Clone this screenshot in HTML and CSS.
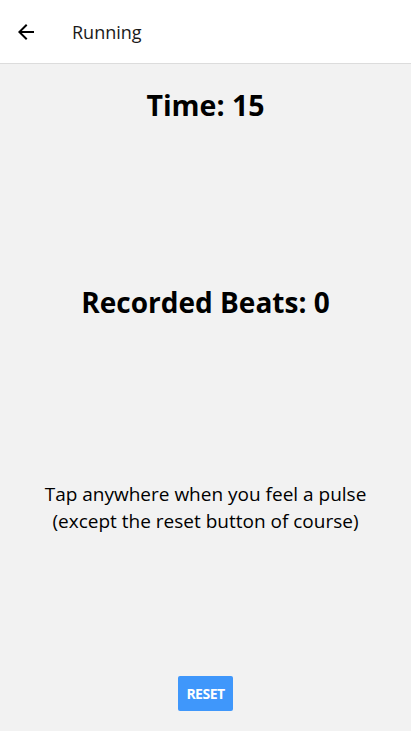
FILE: index.html
```html
<!DOCTYPE html>
<html>
<head>
<meta charset="utf-8">
<link rel="stylesheet" href="styles.css">
</head>
<body>
<div class="app">
  <header class="bar">
    <svg class="back" width="24" height="24" viewBox="0 0 24 24"><path d="M20 11H7.83l5.59-5.59L12 4l-8 8 8 8 1.41-1.41L7.83 13H20v-2z" fill="#000"/></svg>
    <span class="title">Running</span>
  </header>
  <main class="content">
    <h1 class="time">Time: 15</h1>
    <h1 class="beats">Recorded Beats: 0</h1>
    <p class="hint">Tap anywhere when you feel a pulse<br>(except the reset button of course)</p>
    <button class="reset">RESET</button>
  </main>
</div>
</body>
</html>
```
FILE: styles.css
```css
* { box-sizing: border-box; }
html, body { margin: 0; padding: 0; }
body { font-family: "Open Sans", "Noto Sans", sans-serif; background: #f2f2f2; color: #000; }
.app { width: 411px; height: 731px; display: flex; flex-direction: column; }
.bar { height: 64px; background: #fff; border-bottom: 1px solid #dcdcdc; display: flex; align-items: center; padding-left: 14px; flex-shrink: 0; }
.back { display: block; }
.title { margin-left: 34px; font-size: 18px; font-weight: 500; color: #1a1a1a; }
.content { flex: 1; display: flex; flex-direction: column; align-items: center; }
.time { margin: 22px 0 0; font-size: 28.5px; font-weight: 700; line-height: 38px; }
.beats { margin: 159px 0 0; font-size: 28px; font-weight: 700; line-height: 38px; }
.hint { margin: 160px 0 0; font-size: 19px; line-height: 27px; text-align: center; }
.reset { margin-top: auto; margin-bottom: 20px; width: 55px; height: 35px; border: none; border-radius: 2px; background: #3f97fb; color: #fff; font-family: inherit; font-weight: 700; font-size: 14px; letter-spacing: -0.5px; padding: 0; }
```
